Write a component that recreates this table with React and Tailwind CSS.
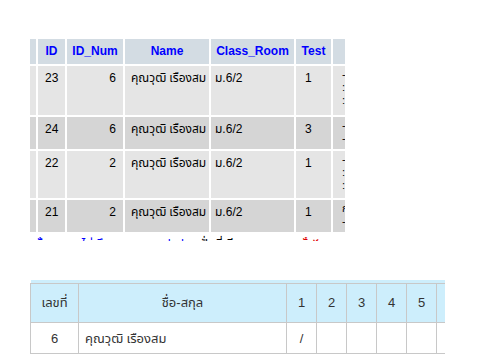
import React from "react";

const rows = [
    { id: 23, num: 6, test: 1, tone: "bg-[#e5e5e5]", h: "h-[49px]", extra: ["-", ":", ":"] },
    { id: 24, num: 6, test: 3, tone: "bg-[#d5d5d5]", h: "h-[32px]", extra: ["-", "-"] },
    { id: 22, num: 2, test: 1, tone: "bg-[#e5e5e5]", h: "h-[47px]", extra: ["-", ":", ":"] },
    { id: 21, num: 2, test: 1, tone: "bg-[#d5d5d5]", h: "h-[32px]", extra: ["ก", "-"] },
];

const font = "font-['Liberation_Sans','Noto_Sans_Thai','Noto_Sans',sans-serif]";

export default function App() {
    return (
        <div className={`w-[490px] h-[364px] bg-white overflow-hidden ${font}`}>
            {/* Top table (phpMyAdmin style) */}
            <div className="ml-[30px] mt-[39px] w-[315px] overflow-hidden">
                <div className="grid grid-cols-[6px_27px_56px_84px_83px_35px_12px] gap-[2px] text-[12px] leading-[15px]">
                    <div className="h-[25px] bg-[#d3dce3]"></div>
                    {["ID", "ID_Num", "Name", "Class_Room", "Test"].map((t) => (
                        <div key={t} className="h-[25px] bg-[#d3dce3] flex items-center justify-center font-bold text-[#0000ff] whitespace-nowrap">
                            {t}
                        </div>
                    ))}
                    <div className="h-[25px] bg-[#d3dce3]"></div>

                    {rows.map((r) => (
                        <React.Fragment key={r.id}>
                            <div className={`${r.h} ${r.tone}`}></div>
                            <div className={`${r.h} ${r.tone} pl-[7px] pt-[5px] text-black`}>{r.id}</div>
                            <div className={`${r.h} ${r.tone} pr-[7px] pt-[5px] text-right text-black`}>{r.num}</div>
                            <div className={`${r.h} ${r.tone} pl-[6px] pt-[5px] text-black whitespace-nowrap`}>คุณวุฒิ เรืองสม</div>
                            <div className={`${r.h} ${r.tone} pl-[4px] pt-[5px] text-black`}>ม.6/2</div>
                            <div className={`${r.h} ${r.tone} pl-[9px] pt-[5px] text-black`}>{r.test}</div>
                            <div className={`${r.h} ${r.tone} pl-[9px] pt-[2px] text-black overflow-hidden text-[11px] leading-[13px]`}>
                                {r.extra.map((e, i) => (
                                    <div key={i}>{e}</div>
                                ))}
                            </div>
                        </React.Fragment>
                    ))}
                </div>

                {/* clipped line of links below the table */}
                <div className="mt-[2px] h-[7px] overflow-hidden text-[12px] leading-[16px] whitespace-nowrap">
                    <div className="flex items-start mt-[2px]">
                        <span className="ml-[5px] text-[#0000ff]">ลั้</span>
                        <span className="ml-[40px] text-[#0000ff]">ไม่ ถึ</span>
                        <span className="ml-[60px] text-[#0000ff]">ป</span>
                        <span className="ml-[6px] text-[#0000ff]">ป</span>
                        <span className="ml-[10px] text-black">เ ปั่นที่ มี</span>
                        <span className="ml-[30px] text-[#e00000] text-[9px] leading-[14px]">▲</span>
                        <span className="ml-[28px] text-[#e00000]">ขั๋ ✗</span>
                    </div>
                </div>
            </div>

            {/* Bottom table */}
            <div className="ml-[30px] mt-[39px] w-[415px] overflow-hidden text-[13px] text-[#333]">
                <div className="w-[445px]">
                    <div className="h-[3px] ml-[1px] bg-[#cdeefc]"></div>
                    <div className="grid grid-cols-[49px_208px_30px_30px_30px_30px_30px_38px]">
                        <div className="h-[40px] bg-[#cdeefc] border border-[#c8c8c8] flex items-center justify-center">เลขที่</div>
                        <div className="h-[40px] bg-[#cdeefc] border-y border-r border-[#c8c8c8] flex items-center justify-center">ชื่อ-สกุล</div>
                        {["1", "2", "3", "4", "5", ""].map((n, i) => (
                            <div key={i} className="h-[40px] bg-[#cdeefc] border-y border-r border-[#c8c8c8] flex items-center justify-center">
                                {n}
                            </div>
                        ))}

                        <div className="h-[31px] border-x border-b border-[#c8c8c8] flex items-center justify-center pt-[2px]">6</div>
                        <div className="h-[31px] border-b border-r border-[#c8c8c8] flex items-center pl-[6px] pt-[2px]">คุณวุฒิ เรืองสม</div>
                        {["/", "", "", "", "", ""].map((n, i) => (
                            <div key={i} className="h-[31px] border-b border-r border-[#c8c8c8] flex items-center justify-center pt-[2px]">
                                {n}
                            </div>
                        ))}
                    </div>
                </div>
            </div>
        </div>
    );
}
